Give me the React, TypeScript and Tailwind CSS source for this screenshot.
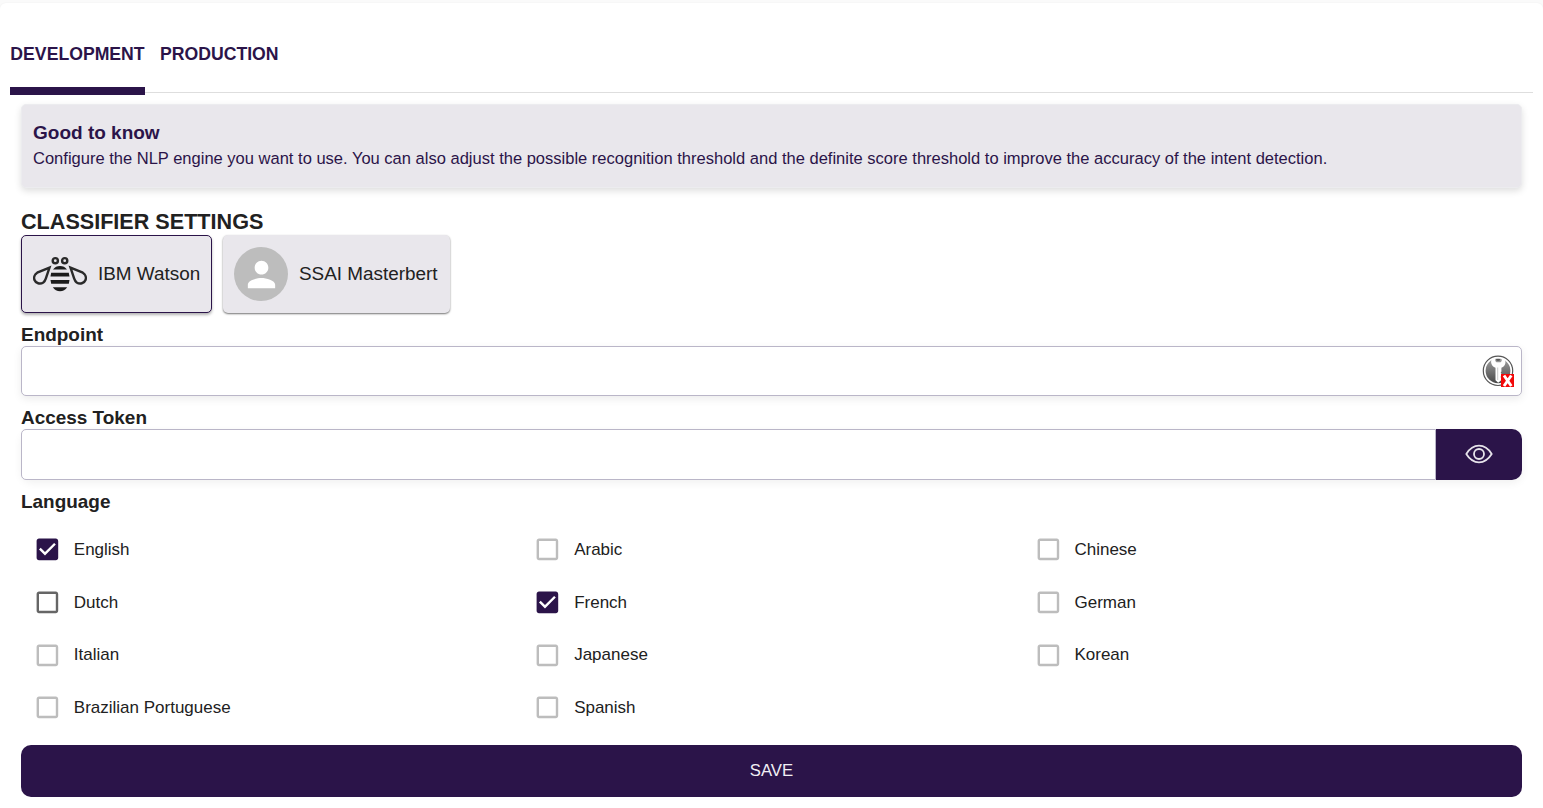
type LanguageOption = { name: string; checked?: boolean; enabled?: boolean };

const languages: LanguageOption[] = [
  { name: 'English', checked: true },
  { name: 'Arabic' },
  { name: 'Chinese' },
  { name: 'Dutch', enabled: true },
  { name: 'French', checked: true },
  { name: 'German' },
  { name: 'Italian' },
  { name: 'Japanese' },
  { name: 'Korean' },
  { name: 'Brazilian Portuguese' },
  { name: 'Spanish' },
];

function CheckboxIcon({ checked, enabled }: { checked?: boolean; enabled?: boolean }) {
  const tone = checked ? 'text-[#2b1449]' : enabled ? 'text-[#666666]' : 'text-[#bdbdbd]';
  return (
    <svg viewBox="0 0 24 24" className={`mb-[1.5px] size-[28.8px] shrink-0 ${tone}`} fill="currentColor">
      {checked ? (
        <path d="M19 3H5c-1.11 0-2 .9-2 2v14c0 1.1.89 2 2 2h14c1.11 0 2-.9 2-2V5c0-1.1-.89-2-2-2zm-9 14l-5-5 1.41-1.41L10 14.17l7.59-7.59L19 8l-9 9z" />
      ) : (
        <path d="M19 5v14H5V5h14m0-2H5c-1.1 0-2 .9-2 2v14c0 1.1.9 2 2 2h14c1.1 0 2-.9 2-2V5c0-1.1-.9-2-2-2z" />
      )}
    </svg>
  );
}

function BeeIcon() {
  return (
    <svg viewBox="0 0 54 54" className="size-[54px] shrink-0" fill="none" stroke="#2a2a2a">
      <circle cx="22.3" cy="13.7" r="2.6" strokeWidth="2.4" />
      <circle cx="31.7" cy="13.7" r="2.6" strokeWidth="2.4" />
      <path d="M16.500 20.600L4.200 25.700C1.400 27.300.6 30.500 1.500 33c1.200 3.300 5.600 4.500 8.800 2.400 1.300-.9 2-2.100 2.500-3.700z" strokeWidth="2.400" />
      <path d="M37.500 20.600l12.300 5.100c2.800 1.600 3.600 4.800 2.700 7.300-1.200 3.300-5.600 4.500-8.800 2.400-1.300-.9-2-2.100-2.500-3.700z" strokeWidth="2.400" />
      <g fill="#1c1c1c" stroke="none">
        <path d="M20 22.500c1.700-2.400 4.200-3.500 7-3.500s5.300 1.100 7 3.500z" />
        <path d="M18.200 25.800h17.600l.7 3.700h-19z" />
        <path d="M17.500 33h19l-.7 3.800H18.200z" />
        <path d="M19.800 40.200h14.400c-1.700 2.700-4.300 4-7.200 4s-5.500-1.300-7.200-4z" />
      </g>
    </svg>
  );
}

function KeyBadgeIcon() {
  return (
    <svg viewBox="0 0 32 32" className="size-8" fill="none">
      <defs>
        <linearGradient id="disc" x1="0" y1="0" x2="0" y2="1">
          <stop offset="0" stopColor="#a0a0a0" />
          <stop offset="1" stopColor="#484848" />
        </linearGradient>
      </defs>
      <circle cx="16" cy="15.800" r="14.700" fill="#fff" stroke="#555" strokeWidth="1.200" />
      <circle cx="16" cy="15.800" r="12.400" fill="url(#disc)" />
      <path
        d="M10.500 3.500C9.300 4.800 8.900 6.300 9.200 8c.4 2.200 2 3.900 4.300 4.800v12.400l2.700 2.500 3.200-2.600v-2l-.9-1.200.9-1.200v-2l-.7-1.100.7-1.200v-3.600c2.200-.9 3.700-2.600 4-4.800.2-1.700-.3-3.200-1.400-4.500l-2.300-1v3.500l-1.200 1.200h-4L13.300 6V2.500z"
        fill="#fff"
      />
      <path d="M14 4h4.200l-.7 1.700h-2.800z" fill="#555" />
      <path d="M15.700 12.500V25" stroke="#bbb" strokeWidth=".8" />
      <path d="M19 19h13v13H19z" fill="#f20808" />
      <path d="M22 20.500l7.300 10.500M29.300 20.500L22 31" stroke="#fff" strokeWidth="2.900" />
    </svg>
  );
}

function EyeIcon() {
  return (
    <svg viewBox="0 0 28 20" className="mb-px h-5 w-7" fill="none" stroke="#e6e3ea" strokeWidth="1.800">
      <path d="M1.300 10C4.700 4.500 9 1.700 14 1.700S23.300 4.500 26.700 10C23.300 15.500 19 18.300 14 18.300S4.700 15.500 1.300 10z" strokeLinejoin="round" />
      <circle cx="14" cy="10" r="5" />
    </svg>
  );
}

export default function App() {
  return (
    <div className="h-[808px] w-full bg-[#fafafa] pt-[3px] font-['Liberation_Sans',Arial,sans-serif] text-[#212121]">
      <main className="h-full rounded-t-md bg-white px-[10px] shadow-[0_0_2px_rgba(0,0,0,0.06)]">
        <nav className="flex h-[92px] text-[17.65px] font-bold text-[#2b1449]">
          <button className="flex h-full w-[135px] items-start justify-center border-b-8 border-[#2b1449] pt-[19px] leading-[64px]">
            DEVELOPMENT
          </button>
          <div className="mb-[2px] flex flex-1 items-start border-b border-[#dedede] pt-[19px] pl-[15px] leading-[64px]">
            <button className="leading-[64px]">PRODUCTION</button>
          </div>
        </nav>

        <div className="px-[11px] pt-[9px]">
          <section className="h-[84px] rounded-[5px] border border-[#ececef] bg-[#e9e7ec] px-[11px] pt-[15px] text-[#2b1449] shadow-[0_3px_7px_rgba(0,0,0,0.13)]">
            <h2 className="text-[19px] leading-[26px] font-bold">Good to know</h2>
            <p className="text-[16.53px] leading-[26px]">
              Configure the NLP engine you want to use. You can also adjust the possible recognition threshold and the definite score threshold to improve the accuracy of the intent detection.
            </p>
          </section>

          <h2 className="mt-[20px] h-[27px] text-[21.6px] leading-[28px] font-bold">CLASSIFIER SETTINGS</h2>
          <div className="flex h-[79px] gap-[11px] text-[18.9px]">
            <button className="flex h-[78px] w-[191px] items-center gap-[11px] rounded-[5px] border border-[#2b1449] bg-[#e9e7ec] pl-[11px] shadow-[0_2px_3px_rgba(0,0,0,0.3)]">
              <BeeIcon />
              <span>IBM Watson</span>
            </button>
            <button className="flex h-[78px] w-[227px] items-center gap-[11px] rounded-[5px] bg-[#e9e7ec] pl-[11px] shadow-[0_1px_2px_rgba(0,0,0,0.55)]">
              <span className="flex size-[54px] items-center justify-center rounded-full bg-[#bdbdbd]">
                <svg viewBox="0 0 24 24" className="size-[41px]" fill="#fff">
                  <path d="M12 12c2.210 0 4-1.790 4-4s-1.790-4-4-4-4 1.790-4 4 1.790 4 4 4zm0 2c-2.670 0-8 1.340-8 4v2h16v-2c0-2.660-5.330-4-8-4z" />
                </svg>
              </span>
              <span>SSAI Masterbert</span>
            </button>
          </div>

          <label className="mt-[8px] block h-[24px] text-[18.95px] leading-[26px] font-bold">Endpoint</label>
          <div className="flex h-[50px] items-center justify-end rounded-[5px] border border-[#bab6c8] bg-white pr-[7px] shadow-[0_3px_8px_rgba(0,0,0,0.08)]">
            <KeyBadgeIcon />
          </div>

          <label className="mt-[9px] block h-[24px] text-[18.95px] leading-[26px] font-bold">Access Token</label>
          <div className="flex h-[51px] rounded-[10px] shadow-[0_3px_8px_rgba(0,0,0,0.06)]">
            <div className="flex-1 rounded-l-[5px] border border-[#bab6c8] bg-white" />
            <button className="flex w-[86px] items-center justify-center rounded-r-[10px] bg-[#2b1449]">
              <EyeIcon />
            </button>
          </div>

          <h3 className="mt-[9px] h-[35px] text-[18.95px] leading-[26px] font-bold">Language</h3>
          <div className="grid grid-cols-3">
            {languages.map((l) => (
              <label key={l.name} className="flex h-[52.700px] items-center pl-[12px] text-[17px]">
                <CheckboxIcon checked={l.checked} enabled={l.enabled} />
                <span className="ml-[12px] pb-[1.100px]">{l.name}</span>
              </label>
            ))}
          </div>

          <button className="mt-[10px] flex h-[52px] w-full items-center justify-center rounded-[10px] bg-[#2b1449] text-[16.700px] text-[#f1eff4]">
            SAVE
          </button>
        </div>
      </main>
    </div>
  );
}
